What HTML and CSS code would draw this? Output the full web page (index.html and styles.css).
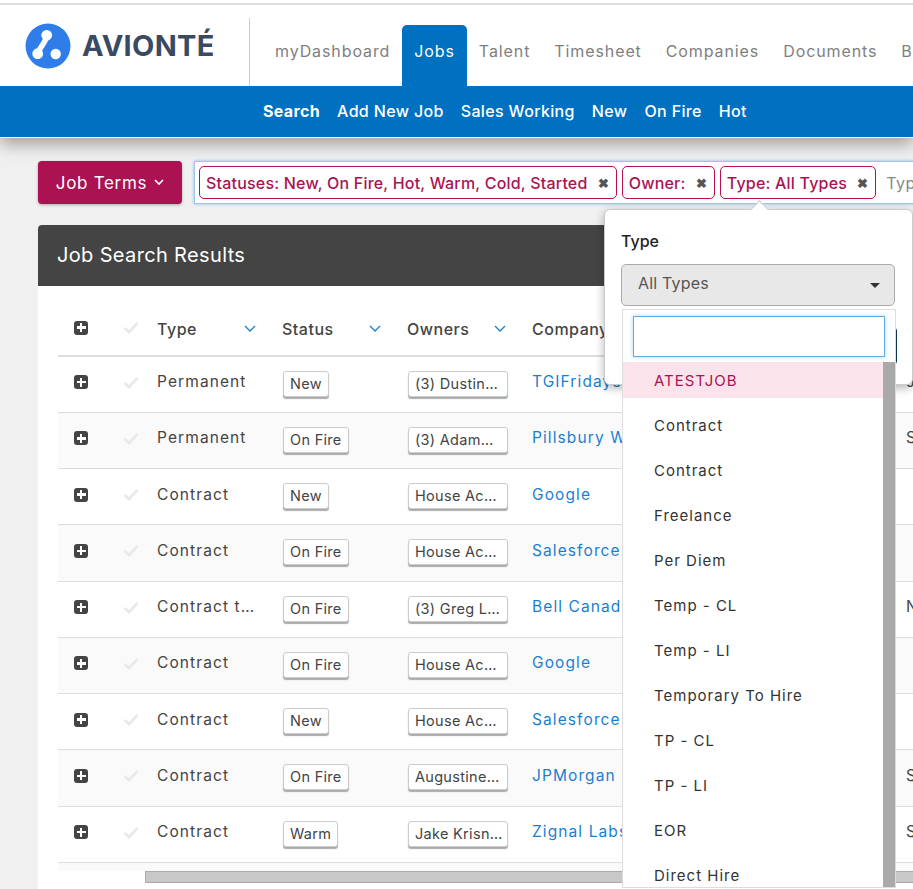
FILE: index.html
```html
<!DOCTYPE html>
<html lang="en">
<head>
    <meta charset="UTF-8">
    <title>Job Search Results</title>
    <link rel="stylesheet" href="styles.css">
</head>
<body>
    <header class="top">
        <div class="top_bar">
            <div class="brand">
                <svg class="brand_icon" width="46" height="46" viewBox="0 0 46 46">
                    <circle cx="23" cy="23" r="22.5" fill="#2e7de9"/>
                    <path d="M21.7 12.3 C21 20 15 23 12.7 30.7" stroke="#fff" stroke-width="5.5" fill="none"/>
                    <circle cx="21.7" cy="12.3" r="5.4" fill="#fff"/>
                    <circle cx="12.7" cy="30.7" r="5.4" fill="#fff"/>
                    <circle cx="30.7" cy="31" r="5.2" fill="#fff"/>
                </svg>
                <span class="brand_name">AVIONTÉ</span>
            </div>
            <nav class="nav">
                <a class="nav_item">myDashboard</a>
                <a class="nav_item active">Jobs</a>
                <a class="nav_item">Talent</a>
                <a class="nav_item">Timesheet</a>
                <a class="nav_item">Companies</a>
                <a class="nav_item">Documents</a>
                <a class="nav_item">Billing</a>
            </nav>
        </div>
        <nav class="subnav">
            <a class="subnav_item current">Search</a>
            <a class="subnav_item">Add New Job</a>
            <a class="subnav_item">Sales Working</a>
            <a class="subnav_item">New</a>
            <a class="subnav_item">On Fire</a>
            <a class="subnav_item">Hot</a>
        </nav>
    </header>

    <main class="main">
        <div class="filters">
            <button type="button" class="button_terms">Job Terms
                <svg width="10" height="7" viewBox="0 0 10 7"><path d="M1 1l4 4 4-4" stroke="#fff" stroke-width="1.6" fill="none"/></svg>
            </button>
            <div class="tag_input">
                <span class="tag">Statuses: New, On Fire, Hot, Warm, Cold, Started <b class="tag_x">✖</b></span>
                <span class="tag">Owner: <b class="tag_x">✖</b></span>
                <span class="tag">Type: All Types <b class="tag_x">✖</b></span>
                <span class="tag_placeholder">Type to search</span>
            </div>
        </div>

        <section class="card">
            <h2 class="card_title">Job Search Results</h2>
            <div class="table">
                <div class="row head">
                    <span class="cell_plus"><i class="plus"></i></span>
                    <span class="cell_check"><svg width="16" height="13" viewBox="0 0 16 13"><path d="M1.5 7l4.5 4 8.5-9" stroke="#eaeaea" stroke-width="3" fill="none"/></svg></span>
                    <span class="cell_head">Type <svg width="12" height="7" viewBox="0 0 12 7"><path d="M1 1l5 5 5-5" stroke="#1a7fd0" stroke-width="1.3" fill="none"/></svg></span>
                    <span class="cell_head">Status <svg width="12" height="7" viewBox="0 0 12 7"><path d="M1 1l5 5 5-5" stroke="#1a7fd0" stroke-width="1.3" fill="none"/></svg></span>
                    <span class="cell_head">Owners <svg width="12" height="7" viewBox="0 0 12 7"><path d="M1 1l5 5 5-5" stroke="#1a7fd0" stroke-width="1.3" fill="none"/></svg></span>
                    <span class="cell_head">Company</span>
                    <span class="cell_head"></span>
                </div>
                <div id="rows"></div>
                <div class="table_end"></div>
            </div>
            <div class="hscroll"><div class="hscroll_thumb"></div></div>
        </section>

        <div class="popover">
            <div class="popover_title">Type</div>
            <div class="select">All Types <i class="caret"></i></div>
            <div class="popover_button"></div>
            <div class="dropdown">
                <div class="dropdown_search"><input type="text" class="dropdown_input"></div>
                <div class="dropdown_body">
                    <ul class="dropdown_list">
                        <li class="dropdown_item selected">ATESTJOB</li>
                        <li class="dropdown_item">Contract</li>
                        <li class="dropdown_item">Contract</li>
                        <li class="dropdown_item">Freelance</li>
                        <li class="dropdown_item">Per Diem</li>
                        <li class="dropdown_item">Temp - CL</li>
                        <li class="dropdown_item">Temp - LI</li>
                        <li class="dropdown_item">Temporary To Hire</li>
                        <li class="dropdown_item">TP - CL</li>
                        <li class="dropdown_item">TP - LI</li>
                        <li class="dropdown_item">EOR</li>
                        <li class="dropdown_item">Direct Hire</li>
                    </ul>
                    <div class="dropdown_scroll"></div>
                </div>
            </div>
        </div>
    </main>

    <script>
        const jobs = [
            ['Permanent', 'New', '(3) Dustin…', 'TGIFridays', 'J'],
            ['Permanent', 'On Fire', '(3) Adam…', 'Pillsbury Winthrop', 'S'],
            ['Contract', 'New', 'House Ac…', 'Google', ''],
            ['Contract', 'On Fire', 'House Ac…', 'Salesforce.com', ''],
            ['Contract t…', 'On Fire', '(3) Greg L…', 'Bell Canada', 'N'],
            ['Contract', 'On Fire', 'House Ac…', 'Google', ''],
            ['Contract', 'New', 'House Ac…', 'Salesforce.com', ''],
            ['Contract', 'On Fire', 'Augustine…', 'JPMorgan Chase', 'S'],
            ['Contract', 'Warm', 'Jake Krisn…', 'Zignal Labs', 'S']
        ];
        const $rows = document.getElementById('rows');

        jobs.forEach(function (job) {
            const $row = document.createElement('div');
            $row.className = 'row';
            $row.innerHTML = `
                <span class="cell_plus"><i class="plus"></i></span>
                <span class="cell_check"><svg width="16" height="13" viewBox="0 0 16 13"><path d="M1.5 7l4.5 4 8.5-9" stroke="#eaeaea" stroke-width="3" fill="none"/></svg></span>
                <span class="cell">${job[0]}</span>
                <span class="cell"><span class="chip">${job[1]}</span></span>
                <span class="cell"><span class="chip chip_owner">${job[2]}</span></span>
                <span class="cell company"><span class="company_name">${job[3]}</span></span>
                <span class="cell">${job[4]}</span>`;
            $rows.appendChild($row);
        });
    </script>
</body>
</html>
```

FILE: styles.css
```css
html, body {
    height: 100%;
}

body {
    margin: 0;
    overflow: hidden;
    background: #f0f0f0;
    font-family: Inter, "Open Sans", sans-serif;
    color: #444;
}

.top {
    position: relative;
    z-index: 1;
    padding-top: 3px;
    background: #fff;
    box-shadow: 0 6px 16px rgba(0, 0, 0, .35);
}

.top_bar {
    display: flex;
    height: 81px;
    border-top: 2px solid #dcdce0;
}

.brand {
    display: flex;
    flex: none;
    align-items: center;
    gap: 11px;
    width: 224px;
    padding-left: 25px;
}

.brand_name {
    font-size: 29px;
    font-weight: 700;
    letter-spacing: .3px;
    color: #3b4a63;
}

.nav {
    display: flex;
    flex: none;
    align-items: flex-end;
    height: 68px;
    margin-top: 13px;
    padding-left: 13px;
    border-left: 1px solid #ccc;
}

.nav_item {
    display: block;
    height: 61px;
    padding: 0 12px;
    box-sizing: border-box;
    border-radius: 5px 5px 0 0;
    font-size: 16px;
    line-height: 52px;
    letter-spacing: .9px;
    color: #808080;
}

.nav_item.active {
    background: #0070c0;
    color: #fff;
}

.subnav {
    display: flex;
    gap: 17px;
    height: 51px;
    padding-left: 263px;
    border-bottom: 1px solid #fff;
    background: #0070c0;
}

.subnav_item {
    font-size: 16px;
    font-weight: 500;
    line-height: 51px;
    letter-spacing: .35px;
    color: #fff;
}

.subnav_item.current {
    font-weight: 700;
}

.main {
    position: relative;
    padding: 23px 0 0 38px;
}

.filters {
    display: flex;
    gap: 12px;
    width: 1000px;
}

.button_terms {
    display: flex;
    align-items: center;
    justify-content: center;
    gap: 7px;
    width: 144px;
    height: 43px;
    border: 0;
    border-radius: 4px;
    background: #ab1252;
    box-shadow: 0 1px 3px rgba(0, 0, 0, .3);
    font-family: inherit;
    font-size: 17px;
    letter-spacing: .7px;
    color: #fff;
}

.tag_input {
    display: flex;
    flex: 1;
    align-items: center;
    gap: 5px;
    padding: 0 4px;
    box-sizing: border-box;
    height: 43px;
    border: 1px solid #9cc6ea;
    background: #fff;
    box-shadow: 0 0 3px rgba(80, 150, 220, .6);
}

.tag {
    display: flex;
    align-items: center;
    justify-content: space-between;
    height: 33px;
    padding: 0 7px 0 6px;
    box-sizing: border-box;
    flex: none;
    border: 1px solid #b8104f;
    border-radius: 5px;
    font-size: 16px;
    font-weight: 500;
    letter-spacing: .2px;
    color: #ab1252;
    white-space: nowrap;
}

.tag_x {
    margin-left: 10px;
    font-size: 13px;
    color: #555;
}

.tag_placeholder {
    margin-left: 5px;
    font-size: 16px;
    letter-spacing: .5px;
    color: #888;
}

.card {
    width: 1000px;
    margin-top: 21px;
    padding-bottom: 30px;
    border-radius: 4px 4px 0 0;
    background: #fff;
}

.card_title {
    height: 61px;
    margin: 0;
    padding-left: 19px;
    border-radius: 4px 4px 0 0;
    background: #444;
    font-size: 20px;
    font-weight: 400;
    line-height: 60px;
    letter-spacing: .35px;
    color: #fff;
}

.table {
    margin: 19px 0 0 20px;
}

.row {
    display: grid;
    grid-template-columns: 57px 42px 125px 125px 125px 374px 60px;
    align-items: center;
    height: 56.25px;
    box-sizing: border-box;
    border-bottom: 1px solid #ddd;
    font-size: 15.5px;
}

.row.head {
    height: 51.5px;
    border-bottom-width: 2px;
}

#rows .row:nth-child(even),
.table_end {
    background: #fafafa;
}

.table_end {
    height: 8px;
}

.cell_plus {
    display: flex;
    padding: 0 0 4px 16px;
}

.cell_check {
    display: flex;
    padding: 0 0 4px 8px;
}

.plus {
    position: relative;
    width: 14px;
    height: 14px;
    border-radius: 3px;
    background: #444;
}

.plus::before,
.plus::after {
    position: absolute;
    background: #fff;
    content: '';
}

.plus::before {
    top: 5.7px;
    left: 2.5px;
    width: 9px;
    height: 2.6px;
}

.plus::after {
    top: 2.5px;
    left: 5.7px;
    width: 2.6px;
    height: 9px;
}

.cell_head {
    display: flex;
    align-items: center;
    justify-content: space-between;
    padding: 0 26px 2px 0;
    font-size: 16px;
    font-weight: 500;
    letter-spacing: .5px;
    color: #444;
}

.cell {
    padding-bottom: 5px;
    letter-spacing: 1.1px;
    white-space: nowrap;
}

.chip {
    display: inline-block;
    height: 26px;
    margin: 4px 0 0 1px;
    padding: 0 6px;
    box-sizing: border-box;
    border: 1px solid #ccc;
    border-radius: 3px;
    background: #fff;
    box-shadow: 0 2px 1px #aaa;
    font-size: 14.5px;
    line-height: 24px;
    letter-spacing: .3px;
}

.chip_owner {
    width: 100px;
}

.company {
    color: #1a7fd0;
}

.company_name {
    display: block;
    width: 108px;
    overflow: hidden;
    text-overflow: ellipsis;
}

.hscroll {
    height: 12px;
    margin-left: 107px;
}

.hscroll_thumb {
    height: 12px;
    box-sizing: border-box;
    border: 1px solid #aaa;
    background: #c8c8c8;
}

.popover {
    position: absolute;
    z-index: 2;
    top: 71px;
    left: 604px;
    width: 309px;
    height: 176px;
    padding: 21px 16px;
    box-sizing: border-box;
    border: 1px solid #ccc;
    border-radius: 6px;
    background: #fff;
    box-shadow: 0 3px 10px rgba(0, 0, 0, .3);
}

.popover::before {
    position: absolute;
    top: -7px;
    left: 148px;
    width: 12px;
    height: 12px;
    border-top: 1px solid #ccc;
    border-left: 1px solid #ccc;
    background: #fff;
    transform: rotate(45deg);
    content: '';
}

.popover_title {
    font-size: 16px;
    font-weight: 500;
    line-height: 20px;
    color: #222;
}

.select {
    display: flex;
    align-items: center;
    justify-content: space-between;
    width: 274px;
    height: 42px;
    margin-top: 13px;
    padding: 0 14px 4px 16px;
    box-sizing: border-box;
    border: 1px solid #aaa;
    border-radius: 5px;
    background: #e8e8e8;
    font-size: 16px;
    letter-spacing: .2px;
    color: #555;
}

.caret {
    margin-top: 4px;
    border-top: 5px solid #333;
    border-left: 5px solid transparent;
    border-right: 5px solid transparent;
}

.popover_button {
    position: absolute;
    top: 118px;
    left: 200px;
    width: 92px;
    height: 36px;
    border-radius: 0 3px 3px 0;
    background: #0e3557;
}

.dropdown {
    position: absolute;
    top: 99px;
    left: 17px;
    width: 274px;
    height: 579px;
    box-sizing: border-box;
    border: 1px solid #ddd;
    background: #fff;
    overflow: hidden;
}

.dropdown_search {
    padding: 6px 10px 5px 10px;
}

.dropdown_input {
    display: block;
    width: 252px;
    height: 41px;
    padding: 0;
    box-sizing: border-box;
    border: 1px solid #5dade2;
    box-shadow: 0 0 4px rgba(93, 173, 226, .5);
    outline: 0;
}

.dropdown_body {
    display: flex;
}

.dropdown_list {
    flex: 1;
    margin: 0;
    padding: 0;
    list-style: none;
}

.dropdown_item {
    height: 45px;
    padding-left: 31px;
    font-size: 15px;
    line-height: 38px;
    letter-spacing: 1px;
    color: #333;
}

.dropdown_item.selected {
    height: 36px;
    margin-bottom: 9px;
    background: #fae3ea;
    color: #ab1252;
}

.dropdown_scroll {
    flex: none;
    width: 12px;
    height: 525px;
    background: #a9a9a9;
}
```
